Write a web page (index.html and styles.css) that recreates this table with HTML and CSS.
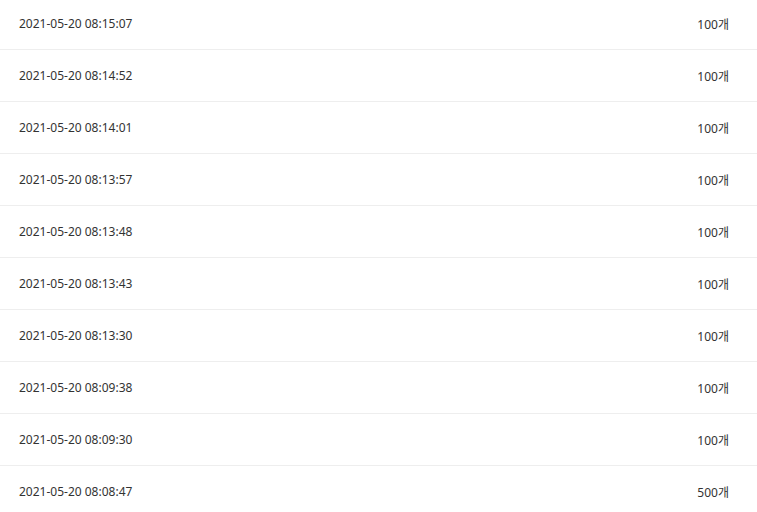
FILE: index.html
```html
<!DOCTYPE html>
<html lang="ko">
<head>
    <meta charset="UTF-8">
    <title>구매 내역</title>
    <link rel="stylesheet" href="styles.css">
</head>
<body>
    <ul class="history">
        <li class="history-row"><span class="date">2021-05-20 08:15:07</span><span class="amount">100개</span></li>
        <li class="history-row"><span class="date">2021-05-20 08:14:52</span><span class="amount">100개</span></li>
        <li class="history-row"><span class="date">2021-05-20 08:14:01</span><span class="amount">100개</span></li>
        <li class="history-row"><span class="date">2021-05-20 08:13:57</span><span class="amount">100개</span></li>
        <li class="history-row"><span class="date">2021-05-20 08:13:48</span><span class="amount">100개</span></li>
        <li class="history-row"><span class="date">2021-05-20 08:13:43</span><span class="amount">100개</span></li>
        <li class="history-row"><span class="date">2021-05-20 08:13:30</span><span class="amount">100개</span></li>
        <li class="history-row"><span class="date">2021-05-20 08:09:38</span><span class="amount">100개</span></li>
        <li class="history-row"><span class="date">2021-05-20 08:09:30</span><span class="amount">100개</span></li>
        <li class="history-row"><span class="date">2021-05-20 08:08:47</span><span class="amount">500개</span></li>
    </ul>
</body>
</html>
```

FILE: styles.css
```css
/* General */
body {
    margin: 0;
    background-color: #fff;
    color: #333;
    font-family: 'Noto Sans', 'Noto Sans CJK KR', sans-serif;
    font-size: 12px;
}

/* History list */
.history {
    list-style: none;
    margin: -2px 0 0;
    padding: 0;
}

.history-row {
    display: flex;
    justify-content: space-between;
    align-items: center;
    height: 51px;
    padding: 0 28px 0 19px;
    border-bottom: 1px solid #eeeeee;
}

.history-row:last-child {
    border-bottom: none;
}

.amount {
    color: #333;
}
```
